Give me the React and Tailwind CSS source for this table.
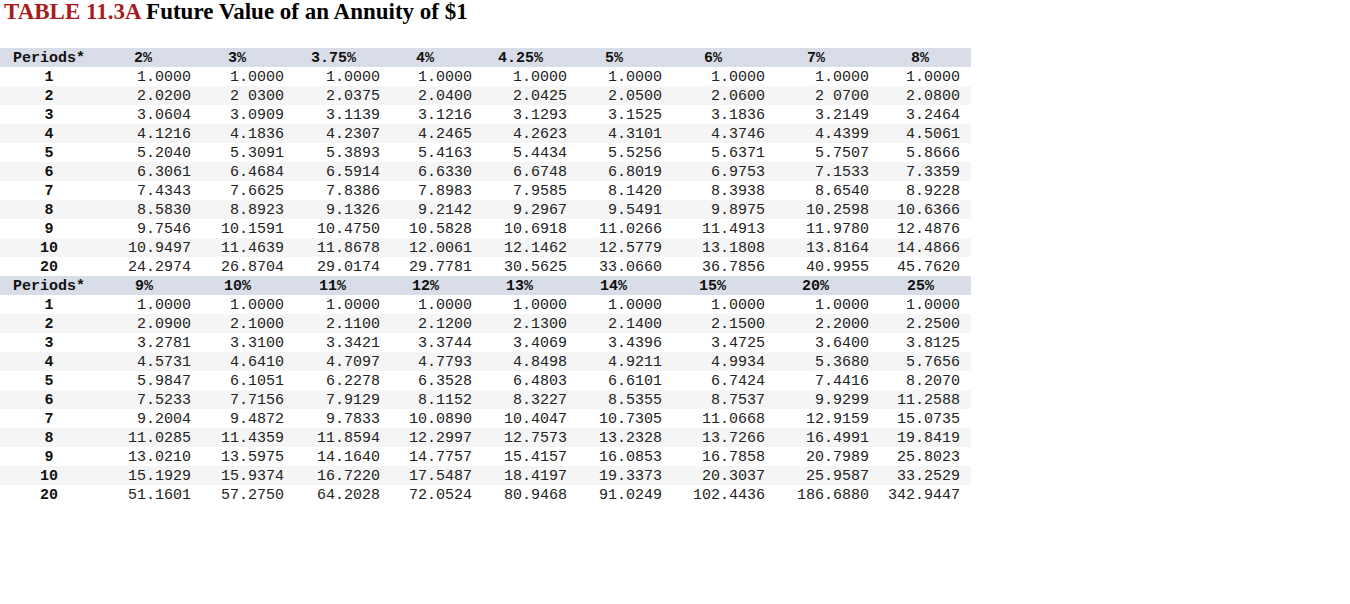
import React from 'react';

const COLS = 'grid grid-cols-[98px_93px_93px_96px_92px_95px_95px_103px_104px_91px]';

const tables = [
  {
    rates: [
      { label: '2%', pad: 'pl-[36px]' },
      { label: '3%', pad: 'pl-[37px]' },
      { label: '3.75%', pad: 'pl-[27px]' },
      { label: '4%', pad: 'pl-[36px]' },
      { label: '4.25%', pad: 'pl-[26px]' },
      { label: '5%', pad: 'pl-[38px]' },
      { label: '6%', pad: 'pl-[42px]' },
      { label: '7%', pad: 'pl-[42px]' },
      { label: '8%', pad: 'pl-[42px]' },
    ],
    rows: [
      ['1', '1.0000', '1.0000', '1.0000', '1.0000', '1.0000', '1.0000', '1.0000', '1.0000', '1.0000'],
      ['2', '2.0200', '2 0300', '2.0375', '2.0400', '2.0425', '2.0500', '2.0600', '2 0700', '2.0800'],
      ['3', '3.0604', '3.0909', '3.1139', '3.1216', '3.1293', '3.1525', '3.1836', '3.2149', '3.2464'],
      ['4', '4.1216', '4.1836', '4.2307', '4.2465', '4.2623', '4.3101', '4.3746', '4.4399', '4.5061'],
      ['5', '5.2040', '5.3091', '5.3893', '5.4163', '5.4434', '5.5256', '5.6371', '5.7507', '5.8666'],
      ['6', '6.3061', '6.4684', '6.5914', '6.6330', '6.6748', '6.8019', '6.9753', '7.1533', '7.3359'],
      ['7', '7.4343', '7.6625', '7.8386', '7.8983', '7.9585', '8.1420', '8.3938', '8.6540', '8.9228'],
      ['8', '8.5830', '8.8923', '9.1326', '9.2142', '9.2967', '9.5491', '9.8975', '10.2598', '10.6366'],
      ['9', '9.7546', '10.1591', '10.4750', '10.5828', '10.6918', '11.0266', '11.4913', '11.9780', '12.4876'],
      ['10', '10.9497', '11.4639', '11.8678', '12.0061', '12.1462', '12.5779', '13.1808', '13.8164', '14.4866'],
      ['20', '24.2974', '26.8704', '29.0174', '29.7781', '30.5625', '33.0660', '36.7856', '40.9955', '45.7620'],
    ],
  },
  {
    rates: [
      { label: '9%', pad: 'pl-[37px]' },
      { label: '10%', pad: 'pl-[33px]' },
      { label: '11%', pad: 'pl-[35px]' },
      { label: '12%', pad: 'pl-[32px]' },
      { label: '13%', pad: 'pl-[34px]' },
      { label: '14%', pad: 'pl-[33px]' },
      { label: '15%', pad: 'pl-[37px]' },
      { label: '20%', pad: 'pl-[37px]' },
      { label: '25%', pad: 'pl-[38px]' },
    ],
    rows: [
      ['1', '1.0000', '1.0000', '1.0000', '1.0000', '1.0000', '1.0000', '1.0000', '1.0000', '1.0000'],
      ['2', '2.0900', '2.1000', '2.1100', '2.1200', '2.1300', '2.1400', '2.1500', '2.2000', '2.2500'],
      ['3', '3.2781', '3.3100', '3.3421', '3.3744', '3.4069', '3.4396', '3.4725', '3.6400', '3.8125'],
      ['4', '4.5731', '4.6410', '4.7097', '4.7793', '4.8498', '4.9211', '4.9934', '5.3680', '5.7656'],
      ['5', '5.9847', '6.1051', '6.2278', '6.3528', '6.4803', '6.6101', '6.7424', '7.4416', '8.2070'],
      ['6', '7.5233', '7.7156', '7.9129', '8.1152', '8.3227', '8.5355', '8.7537', '9.9299', '11.2588'],
      ['7', '9.2004', '9.4872', '9.7833', '10.0890', '10.4047', '10.7305', '11.0668', '12.9159', '15.0735'],
      ['8', '11.0285', '11.4359', '11.8594', '12.2997', '12.7573', '13.2328', '13.7266', '16.4991', '19.8419'],
      ['9', '13.0210', '13.5975', '14.1640', '14.7757', '15.4157', '16.0853', '16.7858', '20.7989', '25.8023'],
      ['10', '15.1929', '15.9374', '16.7220', '17.5487', '18.4197', '19.3373', '20.3037', '25.9587', '33.2529'],
      ['20', '51.1601', '57.2750', '64.2028', '72.0524', '80.9468', '91.0249', '102.4436', '186.6880', '342.9447'],
    ],
  },
];

function RateTable({ rates, rows }) {
  return (
    <div>
      <div className={`${COLS} h-[19px] w-[971px] bg-[#d9dde7] pt-[1px] pr-[11px] font-bold text-[#111]`}>
        <div className="text-center">Periods*</div>
        {rates.map((r) => (
          <div key={r.label} className={r.pad}>
            {r.label}
          </div>
        ))}
      </div>
      {rows.map((row, i) => (
        <div
          key={row[0]}
          className={`${COLS} h-[19px] w-[971px] pt-[1px] pr-[11px] ${i % 2 === 1 ? 'bg-[#f5f5f5]' : 'bg-white'}`}
        >
          <div className="text-center font-bold text-[#111]">{row[0]}</div>
          {row.slice(1).map((v, j) => (
            <div key={j} className="text-right text-[#222]">
              {v}
            </div>
          ))}
        </div>
      ))}
    </div>
  );
}

export default function App() {
  return (
    <div className="min-h-[604px] w-[1350px] bg-white">
      <h1 className="pl-[4px] font-['Liberation_Serif',serif] text-[23px] font-bold leading-[24px] text-black">
        <span className="text-[#a71d1d]">TABLE 11.3A</span> Future Value of an Annuity of $1
      </h1>
      <div className="mt-[24px] overflow-hidden font-['Liberation_Mono',monospace] text-[15px] leading-[19px] whitespace-pre">
        {tables.map((t, i) => (
          <RateTable key={i} rates={t.rates} rows={t.rows} />
        ))}
      </div>
    </div>
  );
}
